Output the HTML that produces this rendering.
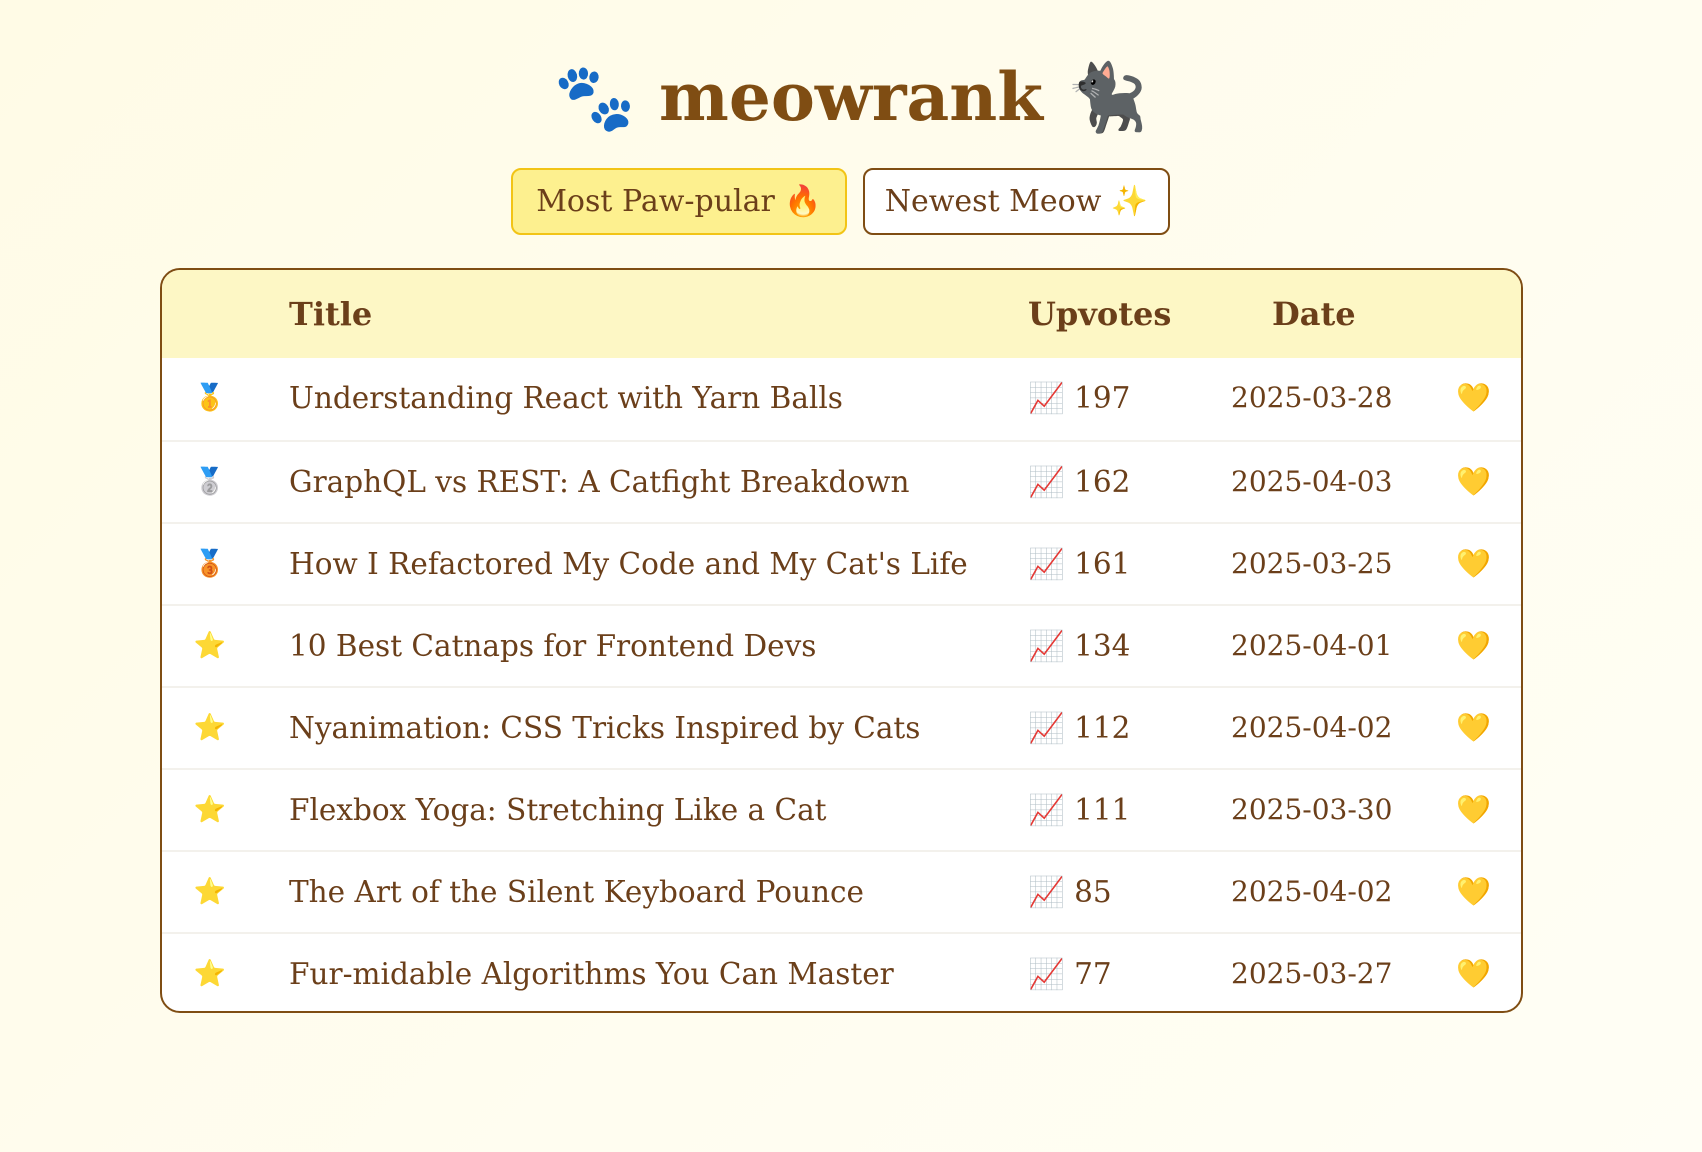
<!DOCTYPE html>
<html><head><meta charset="utf-8"><style>
html,body{margin:0;padding:0;}
body{width:1702px;height:1152px;background:linear-gradient(135deg,#fffbe6,#fffdf0 60%,#fffef5);font-family:"DejaVu Serif","Liberation Serif",serif;color:#6b3f1a;position:relative;overflow:hidden;}
.h1{position:absolute;top:52px;left:0;width:1702px;text-align:center;font-size:66px;font-weight:bold;color:#7f4d13;line-height:90px;white-space:nowrap;}
.btn{position:absolute;top:168px;height:67px;border-radius:10px;font-size:30px;line-height:64px;text-align:center;box-sizing:border-box;color:#6b3f1a;white-space:nowrap;}
.b1{left:511px;width:336px;background:#fdf08f;border:2px solid #f2c416;}
.b2{left:863px;width:307px;background:#fff;border:2px solid #7f4d13;}
.tbl{position:absolute;left:160px;top:268px;width:1363px;height:745px;box-sizing:border-box;border:2px solid #7f4d13;border-radius:20px;overflow:hidden;background:#fff;}
.hd{position:absolute;left:0;top:0;width:100%;height:88px;background:#fdf7c5;font-size:32px;font-weight:bold;line-height:88px;color:#6b3f1a;}
.row{position:absolute;left:0;width:100%;height:82px;border-top:2px solid #f3f1ec;font-size:29.5px;line-height:80px;box-sizing:border-box;}
.c{position:absolute;top:0;white-space:nowrap;}
.r{left:30px;width:36px;text-align:center;font-size:26px;}
.t{left:127px;}
.u{left:866px;}
.d{left:1069px;font-size:28px;}
.hr{left:1294px;font-size:28px;}
</style></head><body>
<div class="h1">🐾 meowrank 🐈‍⬛</div>
<div class="btn b1">Most Paw-pular 🔥</div>
<div class="btn b2">Newest Meow ✨</div>
<div class="tbl">
<div class="hd"><span class="c t" style="font-weight:bold">Title</span><span class="c u">Upvotes</span><span class="c" style="left:1110px">Date</span></div>
<div class="row" style="top:88px;border-top:none"><span class="c r">🥇</span><span class="c t">Understanding React with Yarn Balls</span><span class="c u">📈 197</span><span class="c d">2025-03-28</span><span class="c hr">💛</span></div>
<div class="row" style="top:170px"><span class="c r">🥈</span><span class="c t">GraphQL vs REST: A Catfight Breakdown</span><span class="c u">📈 162</span><span class="c d">2025-04-03</span><span class="c hr">💛</span></div>
<div class="row" style="top:252px"><span class="c r">🥉</span><span class="c t">How I Refactored My Code and My Cat's Life</span><span class="c u">📈 161</span><span class="c d">2025-03-25</span><span class="c hr">💛</span></div>
<div class="row" style="top:334px"><span class="c r">⭐</span><span class="c t">10 Best Catnaps for Frontend Devs</span><span class="c u">📈 134</span><span class="c d">2025-04-01</span><span class="c hr">💛</span></div>
<div class="row" style="top:416px"><span class="c r">⭐</span><span class="c t">Nyanimation: CSS Tricks Inspired by Cats</span><span class="c u">📈 112</span><span class="c d">2025-04-02</span><span class="c hr">💛</span></div>
<div class="row" style="top:498px"><span class="c r">⭐</span><span class="c t">Flexbox Yoga: Stretching Like a Cat</span><span class="c u">📈 111</span><span class="c d">2025-03-30</span><span class="c hr">💛</span></div>
<div class="row" style="top:580px"><span class="c r">⭐</span><span class="c t">The Art of the Silent Keyboard Pounce</span><span class="c u">📈 85</span><span class="c d">2025-04-02</span><span class="c hr">💛</span></div>
<div class="row" style="top:662px"><span class="c r">⭐</span><span class="c t">Fur-midable Algorithms You Can Master</span><span class="c u">📈 77</span><span class="c d">2025-03-27</span><span class="c hr">💛</span></div>
</div>
</body></html>
